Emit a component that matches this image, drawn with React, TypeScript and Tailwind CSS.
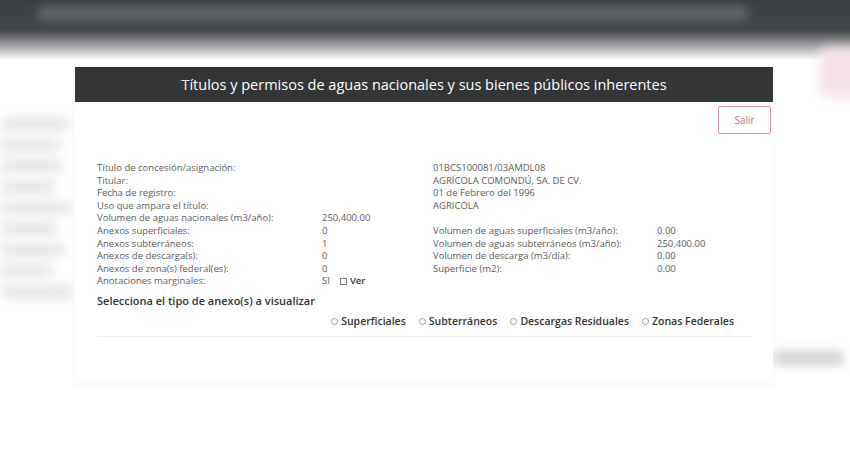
import React from 'react';

const font = { fontFamily: '"Open Sans", "Liberation Sans", sans-serif' };

const topRows = [
    ['Título de concesión/asignación:', '01BCS100081/03AMDL08'],
    ['Titular:', 'AGRÍCOLA COMONDÚ, SA. DE CV.'],
    ['Fecha de registro:', '01 de Febrero del 1996'],
    ['Uso que ampara el título:', 'AGRICOLA'],
];

const pairRows = [
    ['Anexos superficiales:', '0', 'Volumen de aguas superficiales (m3/año):', '0.00'],
    ['Anexos subterráneos:', '1', 'Volumen de aguas subterráneos (m3/año):', '250,400.00'],
    ['Anexos de descarga(s):', '0', 'Volumen de descarga (m3/día):', '0.00'],
    ['Anexos de zona(s) federal(es):', '0', 'Superficie (m2):', '0.00'],
];

const tipos = ['Superficiales', 'Subterráneos', 'Descargas Residuales', 'Zonas Federales'];

// anchos de las líneas borrosas del fondo (izquierda)
const fondo = [70, 60, 64, 56, 72, 58, 66, 52, 74];

const Radio = ({ label }: { label: string }) => (
    <label className="flex items-center gap-[3px]">
        <span className="w-[7px] h-[7px] rounded-full border border-[#9a9a9a] bg-white" />
        <span>{label}</span>
    </label>
);

export default function App() {
    return (
        <div className="relative w-[850px] h-[450px] overflow-hidden bg-white" style={font}>
            {/* fondo desenfocado */}
            <div className="h-[60px] bg-linear-to-b from-[#3b3e41] via-[#45484b] via-50% to-white px-[38px] pt-[6px]">
                <div className="h-[14px] w-[710px] rounded bg-[#62666a] blur-[5px]" />
            </div>
            <div className="mt-[60px] flex flex-col gap-[13px] blur-[6px]">
                {fondo.map((w, i) => (
                    <div key={i} className="h-[8px] bg-[#d6d6d6] rounded" style={{ width: w }} />
                ))}
            </div>

            {/* sombras del fondo a la derecha */}
            <div className="absolute right-[-10px] top-[48px] w-[40px] h-[50px] rounded-md bg-[#f6e2e6] blur-[6px]" />
            <div className="absolute right-[6px] top-[350px] w-[70px] h-[16px] rounded-md bg-[#d6d6d6] blur-[5px]" />

            {/* modal */}
            <div className="absolute top-[67px] left-[75px] w-[698px] bg-white shadow-[0_2px_6px_rgba(0,0,0,0.04)]">
                <div className="h-[35px] bg-[#333537] flex items-center justify-center text-white text-[14.5px]">
                    Títulos y permisos de aguas nacionales y sus bienes públicos inherentes
                </div>
                <div className="pl-[22px] pr-[21px] pb-[46px]">
                    <div className="flex justify-end pt-[4px] -mr-[19px]">
                        <button className="w-[53px] h-[28px] border border-[#cf96a1] rounded-[2px] text-[10px] text-[#b5707f]">
                            Salir
                        </button>
                    </div>

                    <div className="mt-[28px] grid grid-cols-[225px_111px_224px_1fr] text-[9.5px] leading-[12.6px] text-[#5b5b5b]">
                        {topRows.map(([l, v]) => (
                            <React.Fragment key={l}>
                                <div className="col-span-2">{l}</div>
                                <div className="col-span-2">{v}</div>
                            </React.Fragment>
                        ))}
                        <div>Volumen de aguas nacionales (m3/año):</div>
                        <div className="col-span-3">250,400.00</div>
                        {pairRows.map(([a, b, c, d]) => (
                            <React.Fragment key={a}>
                                <div>{a}</div>
                                <div>{b}</div>
                                <div>{c}</div>
                                <div>{d}</div>
                            </React.Fragment>
                        ))}
                        <div>Anotaciones marginales:</div>
                        <div className="col-span-3 flex items-center gap-[10px]">
                            <span>SI</span>
                            <span className="flex items-center gap-[3px] font-semibold text-[#333]">
                                <span className="w-[7px] h-[7px] border border-[#777] bg-white" />
                                Ver
                            </span>
                        </div>
                    </div>

                    <div className="mt-[5px] text-[11px] font-semibold text-[#333]">
                        Selecciona el tipo de anexo(s) a visualizar
                    </div>

                    <div className="mt-[5px] flex justify-end gap-[13px] pr-[18px] text-[10.5px] font-semibold text-[#333] leading-[14px]">
                        {tipos.map((t) => (
                            <Radio key={t} label={t} />
                        ))}
                    </div>

                    <div className="mt-[8px] border-t border-[#eeeeee]" />
                </div>
            </div>
        </div>
    );
}
